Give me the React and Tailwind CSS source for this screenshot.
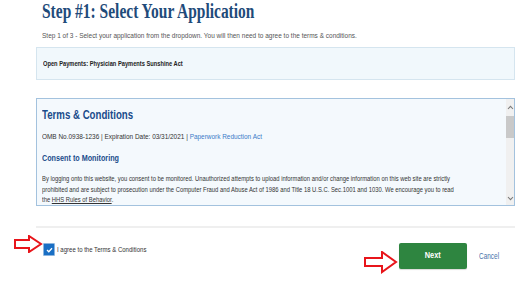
import React from "react";

const sans = "font-['Liberation_Sans',Arial,sans-serif]";

function Chevron({ up }) {
  return (
    <svg width="7" height="5" viewBox="0 0 7 5" className="block">
      <path
        d={up ? "M1 4 L3.5 1.3 L6 4" : "M1 1 L3.5 3.7 L6 1"}
        fill="none"
        stroke="#7a7a7a"
        strokeWidth="1.1"
      />
    </svg>
  );
}

export default function App() {
  return (
    <div className="relative w-[531px] h-[298px] bg-white overflow-hidden">
      <div className="pl-[36px] pr-[16px]">
        <h1 className="pl-[6px] text-[20px] leading-[22px] font-bold text-[#1f4b7a] font-['Liberation_Serif',serif] whitespace-nowrap">
          <span className="inline-block origin-left scale-x-[0.774]">
            Step #1: Select Your Application
          </span>
        </h1>
        <p className={`mt-[9px] pl-[6px] text-[7.8px] leading-[10px] text-[#555] whitespace-nowrap ${sans}`}>
          <span className="inline-block origin-left scale-x-[0.832]">
            Step 1 of 3 - Select your application from the dropdown. You will then need to agree to the terms &amp; conditions.
          </span>
        </p>
        <div className="mt-[6px] h-[33px] border border-[#d5e5ef] bg-[#f1f8fc] flex items-center px-[6px]">
          <span className={`inline-block origin-left scale-x-[0.714] whitespace-nowrap text-[8px] font-bold text-[#222] ${sans}`}>
            Open Payments: Physician Payments Sunshine Act
          </span>
        </div>

        <div className="mt-[18px] h-[108px] border border-[#a3c2de] bg-[#f4f9fd] flex overflow-hidden">
          <div className={`flex-1 min-w-0 pl-[5px] pt-[9px] whitespace-nowrap ${sans}`}>
            <h2 className="text-[12.5px] leading-[14px] font-bold text-[#1a4c8b]">
              <span className="inline-block origin-left scale-x-[0.773]">Terms &amp; Conditions</span>
            </h2>
            <p className="mt-[10px] text-[8px] leading-[10px] text-[#333]">
              <span className="inline-block origin-left scale-x-[0.805]">
                OMB No.0938-1236 | Expiration Date: 03/31/2021 |{" "}
                <span className="text-[#3a7bc8]">Paperwork Reduction Act</span>
              </span>
            </p>
            <h3 className="mt-[10px] text-[9px] leading-[12px] font-bold text-[#1a4c8b]">
              <span className="inline-block origin-left scale-x-[0.802]">Consent to Monitoring</span>
            </h3>
            <div className="mt-[10px] text-[7.4px] leading-[10.5px] text-[#333] origin-left scale-x-[0.792]">
              <div>
                By logging onto this website, you consent to be monitored. Unauthorized attempts to upload information and/or change information on this web site are strictly
              </div>
              <div>
                prohibited and are subject to prosecution under the Computer Fraud and Abuse Act of 1986 and Title 18 U.S.C. Sec.1001 and 1030. We encourage you to read
              </div>
              <div>
                the <span className="underline">HHS Rules of Behavior</span>.
              </div>
            </div>
          </div>
          <div className="w-[8px] flex flex-col items-center bg-[#f0f0f0]">
            <div className="h-[17px] flex items-center justify-center">
              <Chevron up />
            </div>
            <div className="h-[22px] w-full bg-[#c9c9c9]"></div>
            <div className="flex-1"></div>
            <div className="h-[14px] flex items-center justify-center">
              <Chevron />
            </div>
          </div>
        </div>

        <div className="mt-[20px] h-[2px] bg-[#efefef]"></div>

        <div className="mt-[15px] flex justify-between items-start">
          <label className="flex items-center gap-[2px] pl-[7px] h-[13px]">
            <span className="w-[12px] h-[13px] rounded-[1px] border border-[#8db5de] bg-[#1a6fc4] flex items-center justify-center">
              <svg width="7" height="6" viewBox="0 0 7 6">
                <path d="M1 3 L2.8 4.8 L6 1.2" fill="none" stroke="#fff" strokeWidth="1.3" />
              </svg>
            </span>
            <span className={`inline-block origin-left scale-x-[0.754] whitespace-nowrap text-[8px] text-[#333] ${sans}`}>
              I agree to the Terms &amp; Conditions
            </span>
          </label>
          <div className="flex items-center gap-[12px] pr-[10px]">
            <button className={`w-[68px] h-[26px] rounded-[2px] bg-[#2e8540] text-white text-[9px] font-bold shadow-[0_1px_1px_rgba(0,0,0,0.15)] ${sans}`}>
              <span className="inline-block scale-x-[0.82]">Next</span>
            </button>
            <span className={`inline-block origin-left scale-x-[0.76] text-[8.5px] text-[#4773aa] ${sans}`}>Cancel</span>
          </div>
        </div>
      </div>

      <svg className="absolute left-[14px] top-[235px]" width="29" height="18" viewBox="0 0 29 18">
        <path d="M1 5 H15 V1 L27 9 L15 17 V13 H1 Z" fill="#fff" stroke="#e8151b" strokeWidth="2" strokeLinejoin="miter" />
      </svg>
      <svg className="absolute left-[364px] top-[251px]" width="34" height="23" viewBox="0 0 34 23">
        <path d="M1 7 H18 V1 L32 11 L18 21 V15 H1 Z" fill="#fff" stroke="#e8151b" strokeWidth="2" strokeLinejoin="miter" />
      </svg>
    </div>
  );
}
